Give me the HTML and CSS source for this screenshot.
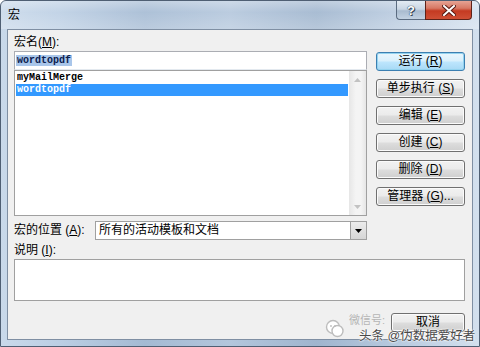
FILE: index.html
```html
<!DOCTYPE html>
<html lang="zh-CN">
<head>
<meta charset="utf-8">
<title>宏</title>
<link rel="stylesheet" href="styles.css">
</head>
<body>
<div class="window">
  <div class="titlebar">
    <span class="title">宏</span>
    <div class="caption-btns">
      <div class="cbtn help">?</div>
      <div class="cbtn close">
        <svg width="14" height="11" viewBox="0 0 14 11"><path d="M2 1 L12 10 M12 1 L2 10" stroke="#5a1a12" stroke-width="4" stroke-linecap="square"/><path d="M2 1 L12 10 M12 1 L2 10" stroke="#ffffff" stroke-width="2" stroke-linecap="square"/></svg>
      </div>
    </div>
  </div>
  <div class="client">
    <div class="top">
      <div class="leftcol">
        <div class="label">宏名(<u>M</u>):</div>
        <div class="namebox"><span class="sel">wordtopdf</span></div>
        <div class="listbox">
          <div class="items">
            <div class="item">myMailMerge</div>
            <div class="item selected">wordtopdf</div>
          </div>
          <div class="scrollbar">
            <div class="sbtn"><svg width="7" height="4" viewBox="0 0 7 4"><path d="M0 4 L3.5 0 L7 4 Z" fill="#c2c2c2"/></svg></div>
            <div class="sbtn"><svg width="7" height="4" viewBox="0 0 7 4"><path d="M0 0 L3.5 4 L7 0 Z" fill="#c2c2c2"/></svg></div>
          </div>
        </div>
      </div>
      <div class="buttons">
        <div class="btn default">运行 (<u>R</u>)</div>
        <div class="btn">单步执行 (<u>S</u>)</div>
        <div class="btn">编辑 (<u>E</u>)</div>
        <div class="btn">创建 (<u>C</u>)</div>
        <div class="btn">删除 (<u>D</u>)</div>
        <div class="btn">管理器 (<u>G</u>)...</div>
      </div>
    </div>
    <div class="locrow">
      <span class="label loclabel">宏的位置 (<u>A</u>):</span>
      <div class="select">
        <span class="seltext">所有的活动模板和文档</span>
        <div class="dd"><svg width="7" height="4" viewBox="0 0 7 4"><path d="M0 0 L3.5 4 L7 0 Z" fill="#000"/></svg></div>
      </div>
    </div>
    <div class="label desclabel">说明 (<u>I</u>):</div>
    <div class="desc"></div>
    <div class="footer">
      <div class="btn cancel"><span class="cancel-text">取消</span></div>
    </div>
  </div>
  <div class="watermark">
    <svg class="wm-icon" width="20" height="20" viewBox="0 0 20 20"><circle cx="8" cy="8" r="6.5" fill="#fff" stroke="#bdbdbd" stroke-width="1.4"/><circle cx="12.5" cy="12" r="5.5" fill="#fff" stroke="#bdbdbd" stroke-width="1.4"/><circle cx="6" cy="7" r="0.9" fill="#bdbdbd"/><circle cx="10" cy="7" r="0.9" fill="#bdbdbd"/></svg>
    <span class="wm-wx">微信号:</span>
    <span class="wm-tt">头条 @伪数据爱好者</span>
  </div>
</div>
</body>
</html>
```

FILE: styles.css
```css
html, body {
  margin: 0;
  padding: 0;
  background: #ffffff;
}

.window {
  position: relative;
  width: 480px;
  height: 347px;
  box-sizing: border-box;
  border: 1px solid #4f5f73;
  border-radius: 6px 6px 0 0;
  background:
    linear-gradient(to right, #c9d9ea 0%, #bccfe4 12%, #a4bad3 30%, #b3c6dc 48%, #9fb5ce 66%, #b7c9de 82%, #d3e0ee 100%);
  font-family: "Liberation Sans", "Noto Sans CJK SC", sans-serif;
  font-size: 12px;
  color: #000;
  overflow: hidden;
}

.titlebar {
  height: 28px;
  display: flex;
  align-items: flex-start;
  justify-content: space-between;
  padding-left: 7px;
  background: linear-gradient(to bottom, rgba(255,255,255,0.35) 0%, rgba(255,255,255,0.1) 40%, rgba(255,255,255,0.25) 100%);
}

.title {
  line-height: 28px;
  font-size: 12px;
  color: #000;
}

.caption-btns {
  display: flex;
  margin-right: 7px;
}

.cbtn {
  height: 19px;
  box-sizing: border-box;
  display: flex;
  align-items: center;
  justify-content: center;
  border: 1px solid #5a6b80;
  border-top: none;
}

.help {
  width: 29px;
  border-radius: 0 0 0 4px;
  border-right: none;
  background: linear-gradient(to bottom, #e3ebf3 0%, #c9d6e4 45%, #a9bbcf 55%, #c3d2e2 100%);
  color: #fff;
  font-weight: bold;
  font-size: 13px;
  font-family: "Liberation Sans", sans-serif;
  text-shadow: 0 0 1px #2f3d4f, 0 0 1px #2f3d4f, 1px 1px 0 #3c4a5c;
}

.close {
  width: 47px;
  border-radius: 0 0 4px 0;
  border-color: #5e2218;
  background: linear-gradient(to bottom, #e6a394 0%, #d77864 40%, #c43a22 55%, #cf4f35 100%);
}

.client {
  margin: 0 6px;
  height: 311px;
  box-sizing: border-box;
  border: 1px solid #7f8fa3;
  background: #f0f0f0;
  padding: 4px 7px 0 6px;
  display: flex;
  flex-direction: column;
}

.top {
  display: flex;
  gap: 9px;
}

.leftcol {
  width: 353px;
  display: flex;
  flex-direction: column;
}

.label {
  line-height: 17px;
  height: 17px;
  white-space: nowrap;
}

.namebox {
  height: 19px;
  box-sizing: border-box;
  border: 1px solid #abadb3;
  border-bottom-color: #e3e9ef;
  background: #fff;
  padding: 2px 1px 0 1px;
  font-family: "Liberation Mono", monospace;
  font-weight: bold;
  font-size: 10px;
  line-height: 13px;
}

.sel {
  background: #a9c6ea;
  color: #0d1d4f;
  padding: 0 1px;
}

.listbox {
  height: 146px;
  box-sizing: border-box;
  border: 1px solid #a0a0a0;
  background: #fff;
  display: flex;
}

.items {
  flex: 1;
  padding: 1px 1px 0 1px;
  font-family: "Liberation Mono", monospace;
  font-weight: bold;
  font-size: 10px;
}

.item {
  height: 12px;
  line-height: 12px;
  padding-left: 1px;
  white-space: nowrap;
}

.item.selected {
  background: #3399ff;
  color: #fff;
}

.scrollbar {
  width: 17px;
  background: linear-gradient(to right, #e6e6e6, #f4f4f4 40%, #f4f4f4 70%, #e6e6e6);
  display: flex;
  flex-direction: column;
  justify-content: space-between;
}

.sbtn {
  height: 17px;
  display: flex;
  align-items: center;
  justify-content: center;
}

.buttons {
  width: 89px;
  padding-top: 18px;
  display: flex;
  flex-direction: column;
  gap: 8px;
}

.btn {
  height: 19px;
  box-sizing: border-box;
  border: 1px solid #707070;
  border-radius: 3px;
  background: linear-gradient(to bottom, #f2f2f2 0%, #ebebeb 48%, #dddddd 52%, #cfcfcf 100%);
  box-shadow: inset 0 0 0 1px #fbfbfb;
  display: flex;
  align-items: center;
  justify-content: center;
  line-height: 17px;
  white-space: nowrap;
}

.btn.default {
  border-color: #3c7fb1;
  background: linear-gradient(to bottom, #eaf6fd 0%, #d9f0fc 48%, #bee6fd 52%, #a7d9f5 100%);
  box-shadow: inset 0 0 0 1px #94d3ef;
}

.locrow {
  display: flex;
  align-items: center;
  margin-top: 5px;
  height: 19px;
}

.loclabel {
  width: 81px;
}

.select {
  width: 272px;
  height: 19px;
  box-sizing: border-box;
  border: 1px solid #a0a0a0;
  background: #fff;
  display: flex;
  align-items: stretch;
}

.seltext {
  flex: 1;
  padding-left: 3px;
  line-height: 17px;
}

.dd {
  width: 16px;
  box-sizing: border-box;
  border-left: 1px solid #a0a0a0;
  background: linear-gradient(to bottom, #ececec, #d6d6d6);
  display: flex;
  align-items: center;
  justify-content: center;
}

.desclabel {
  margin-top: 2px;
}

.desc {
  height: 42px;
  box-sizing: border-box;
  border: 1px solid #a0a0a0;
  background: #fff;
}

.footer {
  display: flex;
  justify-content: flex-end;
  margin-top: 12px;
}

.btn.cancel {
  width: 74px;
  align-items: flex-start;
}

.cancel-text {
  line-height: 12px;
  height: 12px;
  margin-top: 2px;
}

.watermark {
  position: absolute;
  left: 322px;
  top: 313px;
  width: 155px;
  height: 30px;
  pointer-events: none;
}

.wm-icon {
  position: absolute;
  left: 2px;
  top: 5px;
}

.wm-wx {
  position: absolute;
  left: 26px;
  top: 1px;
  font-size: 11px;
  line-height: 11px;
  color: #b5b5b5;
}

.wm-tt {
  position: absolute;
  left: 36px;
  top: 16px;
  font-size: 12.5px;
  line-height: 12px;
  color: #4a4a4a;
  white-space: nowrap;
  text-shadow: 0 0 2px #fff, 0 0 2px #fff, 0 0 1px #fff;
}
```
